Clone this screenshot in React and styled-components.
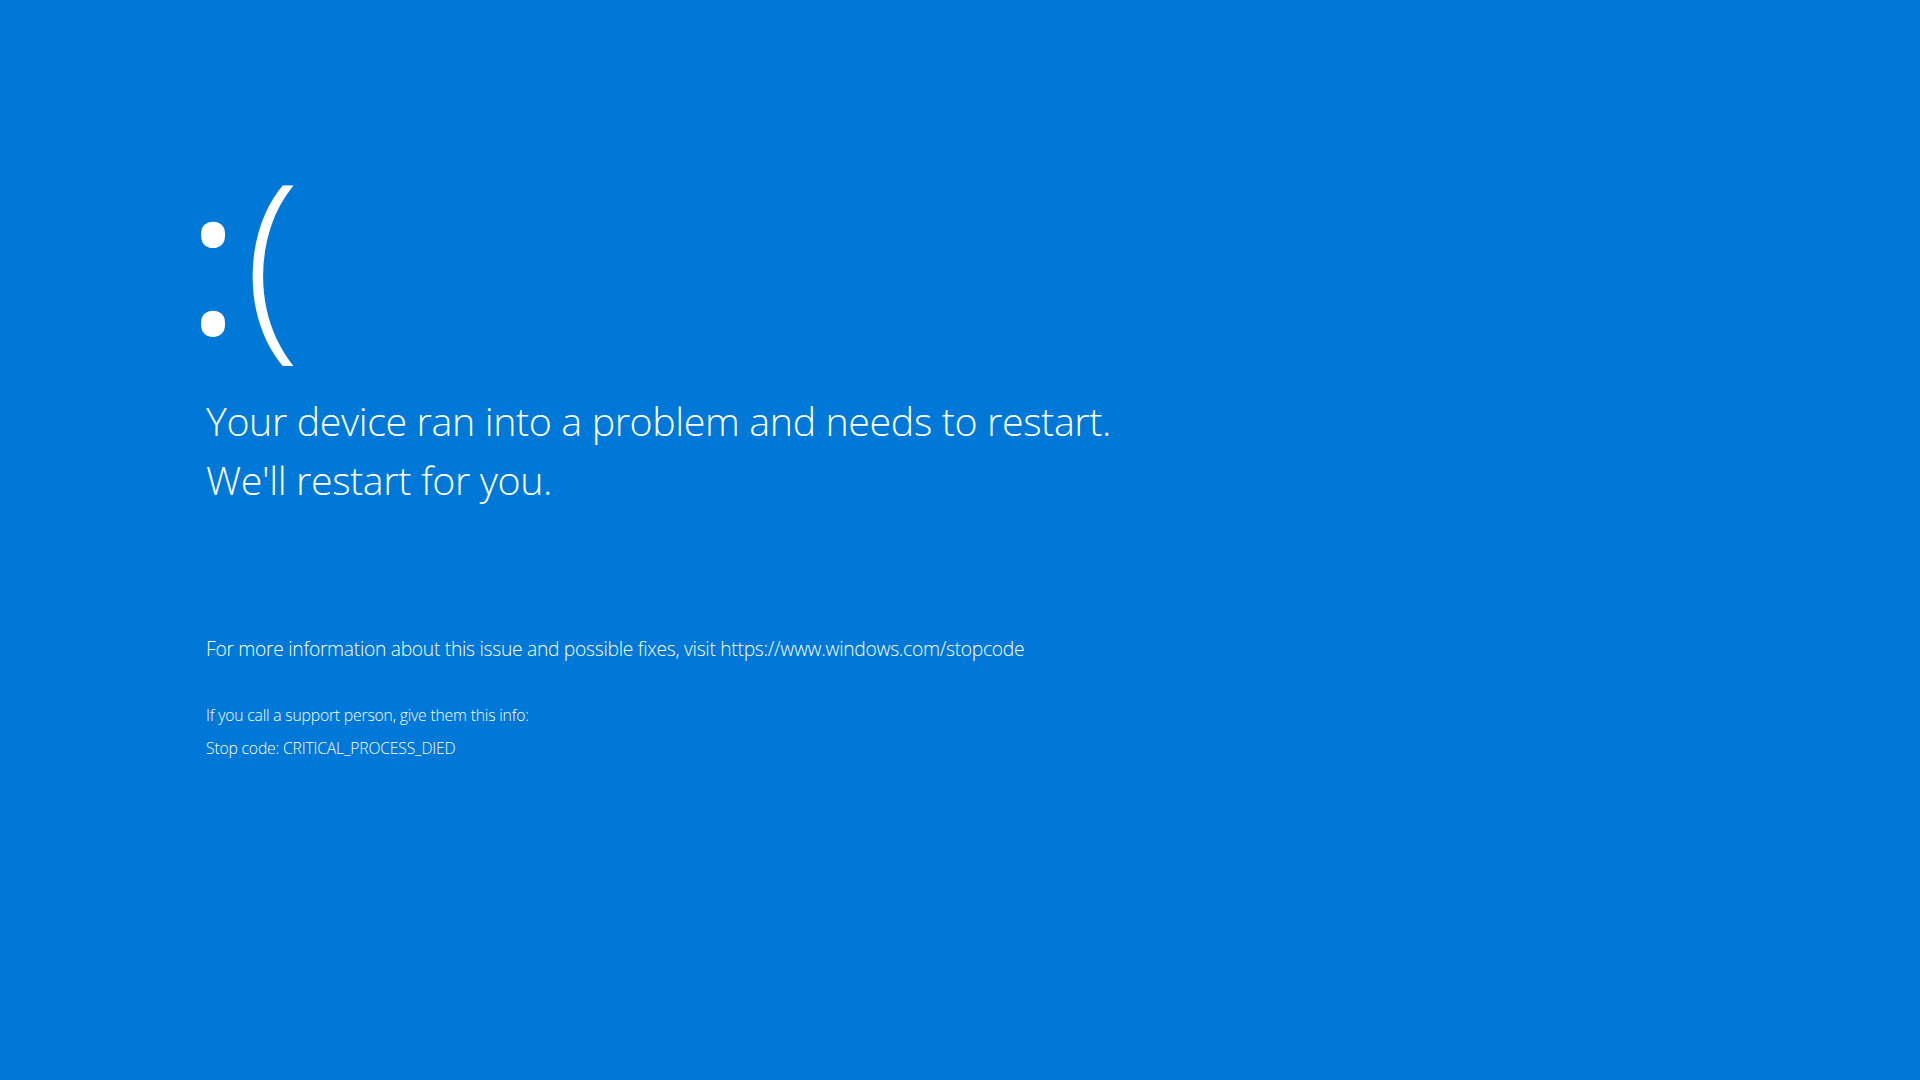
import React from "react";
import styled, { createGlobalStyle } from "styled-components";

const Global = createGlobalStyle`
  html, body {
    margin: 0;
    padding: 0;
    background: #0078d7;
    width: 100%;
    height: 100%;
    overflow: hidden;
  }
  #root { height: 100%; }
`;

const Screen = styled.main`
  box-sizing: border-box;
  width: 1920px;
  height: 1080px;
  background: #0078d7;
  color: #ffffff;
  font-family: "Open Sans", "Noto Sans", sans-serif;
  font-weight: 300;
  padding: 128px 0 0 206px;
  display: flex;
  flex-direction: column;
`;

const Face = styled.div`
  font-size: 206px;
  line-height: 250px;
  height: 250px;
  display: flex;
  align-items: baseline;
  margin-left: -20px;
`;

const Colon = styled.span`
  font-weight: 500;
  margin-right: 4px;
  position: relative;
  top: 1px;
`;

const Paren = styled.span`
  font-weight: 300;
`;

const Headline = styled.h1`
  margin: 14px 0 0 0;
  font-size: 39.4px;
  font-weight: 300;
  line-height: 58.5px;
  letter-spacing: -0.4px;
`;

const Info = styled.p`
  margin: ${(p) => p.$top}px 0 0 0;
  font-size: ${(p) => p.$size}px;
  font-weight: 300;
  line-height: ${(p) => p.$lh}px;
  letter-spacing: ${(p) => p.$ls}px;
`;

export default function App() {
  return (
    <>
      <Global />
      <Screen>
        <Face>
          <Colon>:</Colon>
          <Paren>(</Paren>
        </Face>
        <Headline>
          Your device ran into a problem and needs to restart.
          <br />
          We'll restart for you.
        </Headline>
        <Info $top={125} $size={19.3} $lh={30} $ls={-0.3}>
          For more information about this issue and possible fixes, visit https://www.windows.com/stopcode
        </Info>
        <Info $top={34} $size={15.75} $lh={34} $ls={-0.2}>
          If you call a support person, give them this info:
        </Info>
        <Info $top={0} $size={15.75} $lh={33} $ls={-0.2}>
          Stop code: CRITICAL_PROCESS_DIED
        </Info>
      </Screen>
    </>
  );
}
